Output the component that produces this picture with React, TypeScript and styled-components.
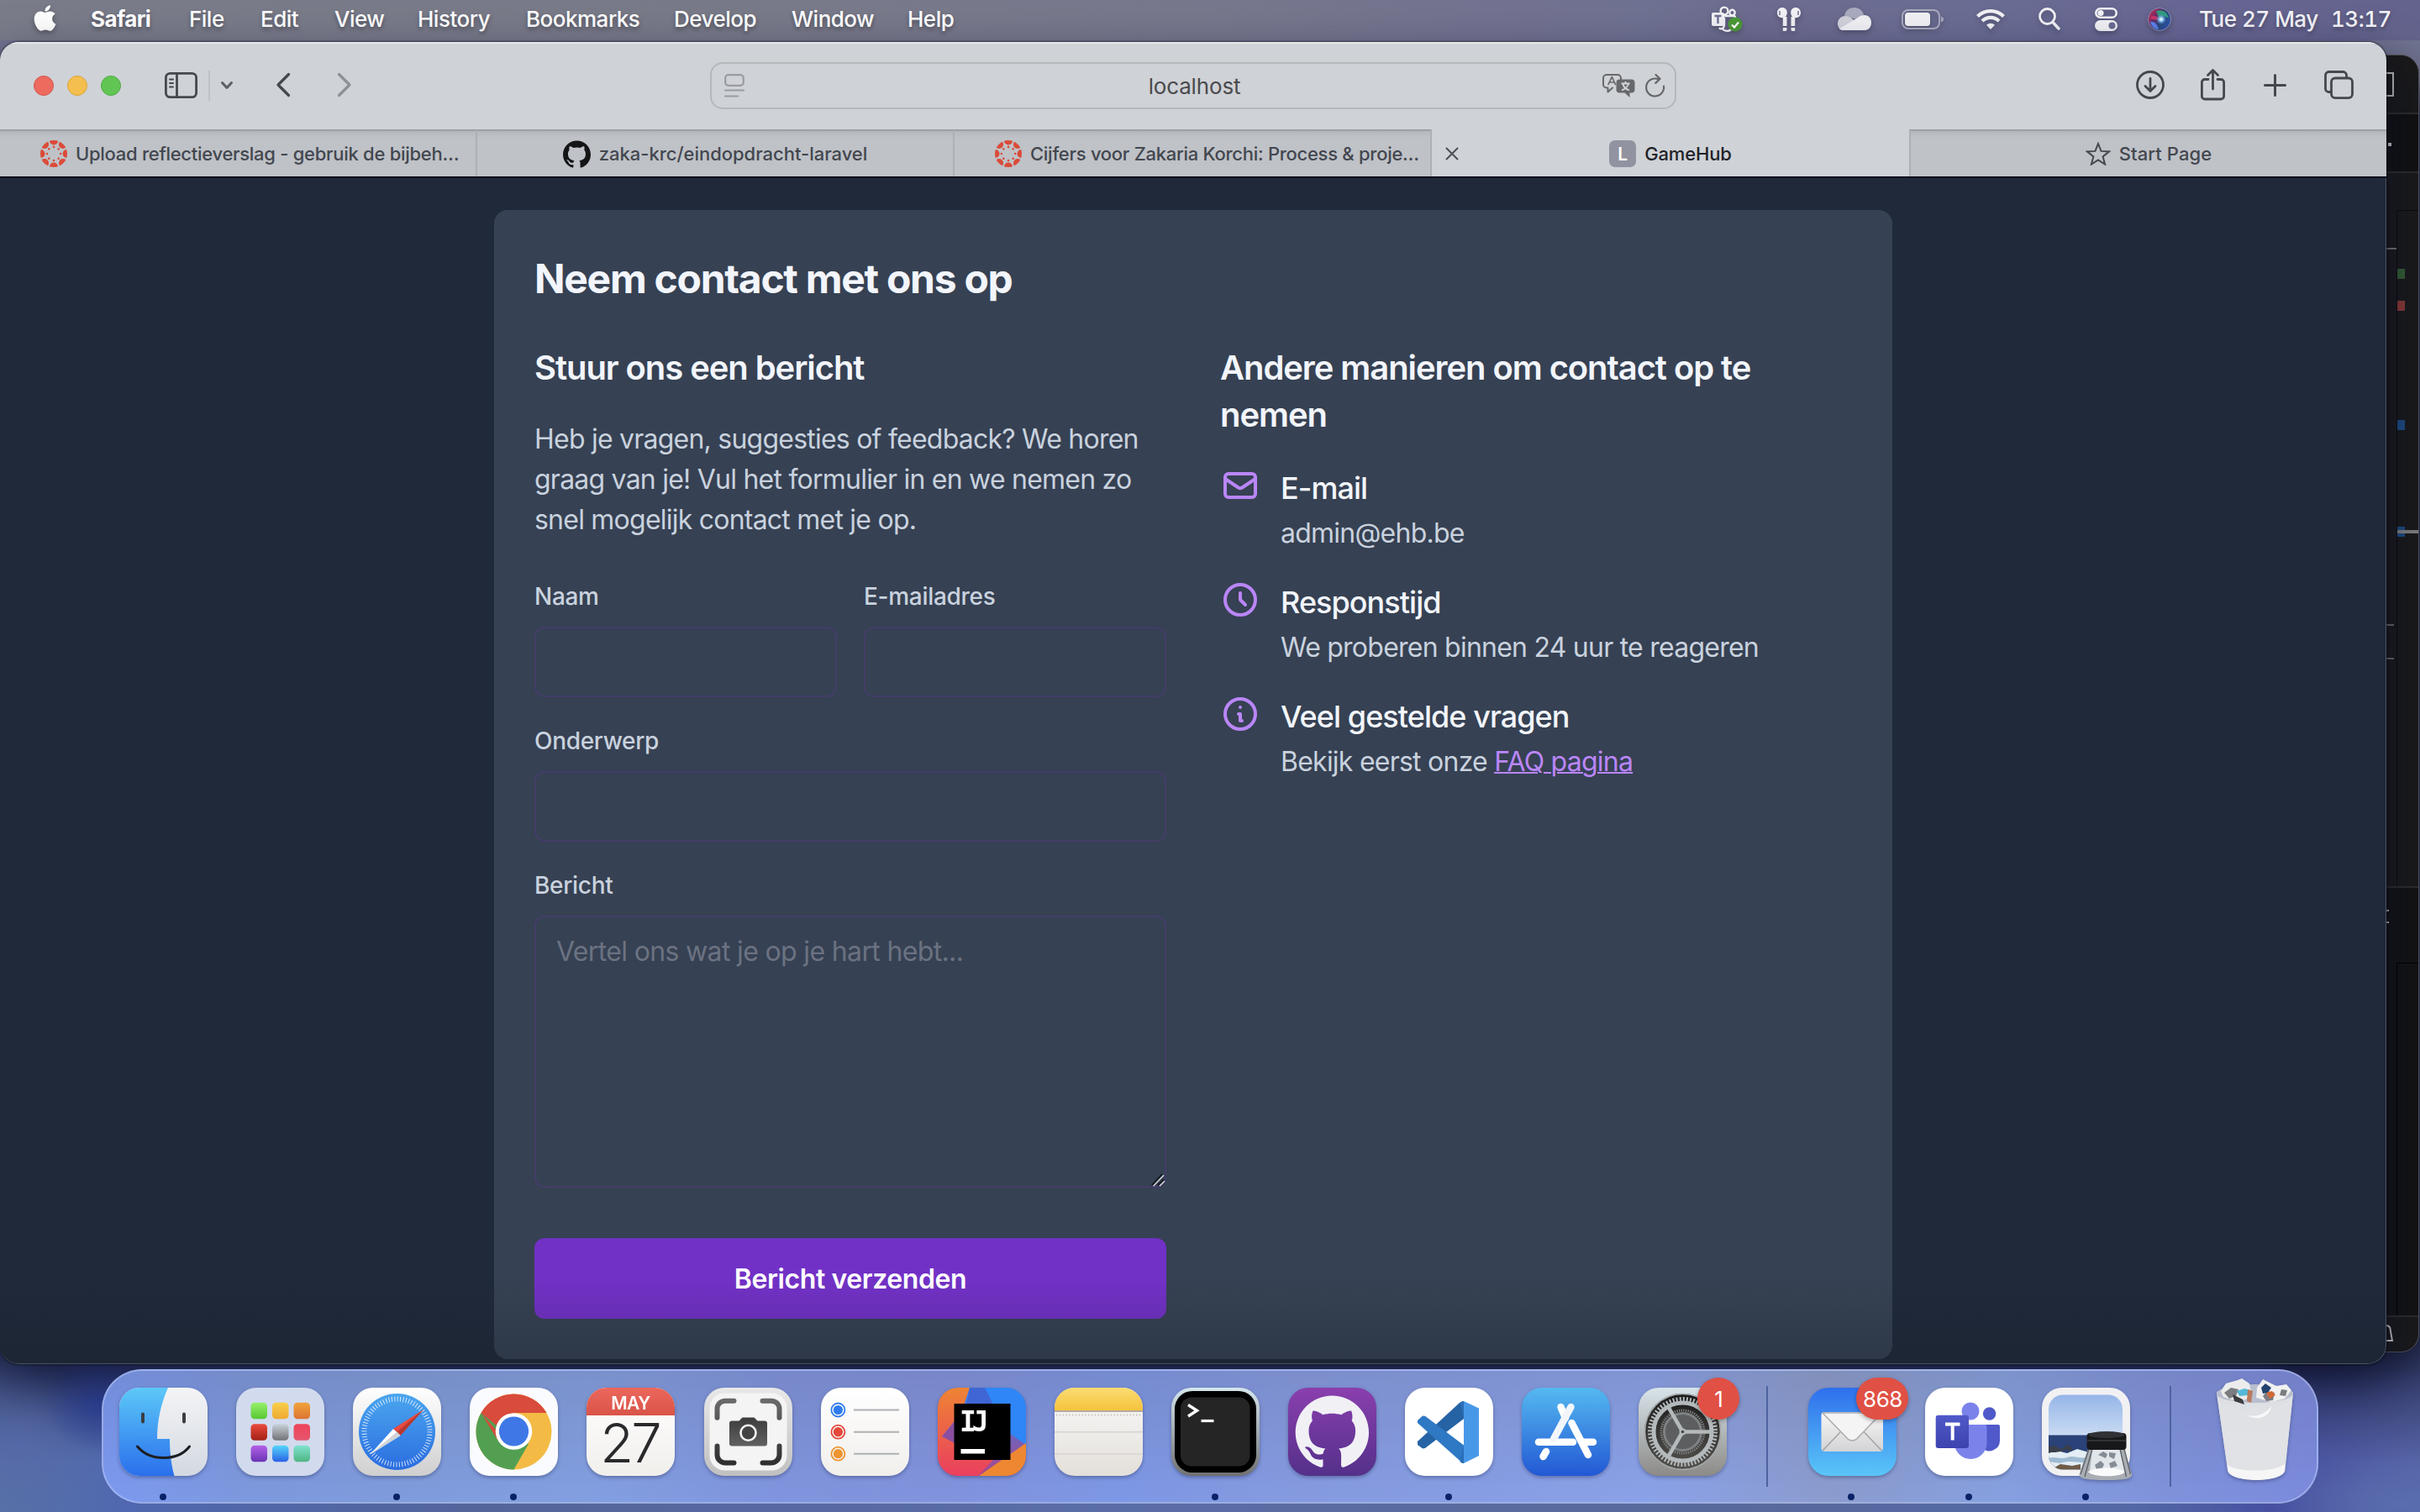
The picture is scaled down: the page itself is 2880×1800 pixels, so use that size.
import React from "react";
import styled, { createGlobalStyle, css } from "styled-components";
import { FaApple } from "react-icons/fa";

const sans = `Inter, Roboto, "Liberation Sans", sans-serif`;

const GlobalStyle = createGlobalStyle`
  *, *::before, *::after { box-sizing: border-box; }
  body { margin: 0; font-family: ${sans}; overflow: hidden; }
  h1, h2, h3, p { margin: 0; }
`;

/* ---------- desktop ---------- */

const Desktop = styled.div`
  position: relative;
  width: 2880px;
  height: 1800px;
  overflow: hidden;
  background:
    radial-gradient(ellipse 70px 60px at 120px 1670px, #2f4398 0%, transparent 100%),
    radial-gradient(ellipse 110px 100px at 20px 1720px, rgba(86, 104, 168, 0.9) 0%, transparent 100%),
    radial-gradient(ellipse 160px 60px at 2860px 1790px, rgba(90, 110, 175, 0.9) 0%, transparent 100%),
    linear-gradient(180deg, #70738f 0, #70738f 90px, #2a3158 140px, #2a3158 1600px, transparent 1740px),
    linear-gradient(90deg, #5773a6 0, #5068b0 5%, #53659b 20%, #5a6da6 45%, #586a9c 70%, #5468a6 88%, #4650a0 94%, #5664a6 100%);
`;

const MenuBar = styled.header`
  display: flex;
  align-items: center;
  height: 48px;
  padding: 0 38px 3px 35px;
  color: #fff;
  background: linear-gradient(90deg, #7a7c8a 0%, #797a89 30%, #77788d 50%, #737290 62%, #6f7292 68%, #6d6b90 73%, #6b6e93 80%, #686794 90%, #64638d 100%);
`;

const AppleMark = styled.div`
  display: flex;
  width: 73px;
  padding: 0 0 2px 1px;
  font-size: 35px;
  filter: drop-shadow(0 3px 3px rgba(0, 0, 0, 0.3));
`;

const MenuItem = styled.span<{ $w: number; $bold?: boolean }>`
  width: ${(p) => p.$w}px;
  margin-right: 43px;
  font-size: 26px;
  font-weight: ${(p) => (p.$bold ? 700 : 500)};
  letter-spacing: ${(p) => (p.$bold ? "-0.6px" : "-0.5px")};
  white-space: nowrap;
  text-shadow: 0 3px 5px rgba(0, 0, 0, 0.35);
`;

const StatusArea = styled.div`
  display: flex;
  align-items: center;
  margin-left: auto;
  svg { filter: drop-shadow(0 3px 3px rgba(0, 0, 0, 0.25)); overflow: visible; }
`;

const StatusSlot = styled.div<{ $w: number; $gap: number }>`
  display: flex;
  width: ${(p) => p.$w}px;
  margin-right: ${(p) => p.$gap}px;
`;

const Clock = styled.span<{ $w: number; $gap?: number }>`
  width: ${(p) => p.$w}px;
  margin-right: ${(p) => p.$gap || 0}px;
  font-size: 26px;
  font-weight: 500;
  letter-spacing: -0.5px;
  font-variant-numeric: tabular-nums;
  white-space: nowrap;
  color: #f3f3f8;
  text-shadow: 0 3px 5px rgba(0, 0, 0, 0.3);
`;

/* ---------- editor window peeking out on the right ---------- */

const EditorWindow = styled.section`
  position: absolute;
  left: 2700px;
  top: 65px;
  width: 179px;
  height: 1545px;
  padding-left: 139px;
  display: flex;
  flex-direction: column;
  overflow: hidden;
  border: 1px solid #55565a;
  border-radius: 22px;
  background: #1b1b1b;
  box-shadow: 0 20px 40px rgba(0, 0, 0, 0.4);
`;

const EditorBand = styled.div<{ $h: number; $bg: string }>`
  position: relative;
  flex: none;
  height: ${(p) => p.$h}px;
  background: ${(p) => p.$bg};
  border-bottom: 2px solid #2e2e2e;
`;

const EditorMap = styled.div<{ $top: number; $line: string }>`
  height: calc(100% - ${(p) => p.$top}px);
  margin: ${(p) => p.$top}px 0 0 12px;
  border-left: 1px solid ${(p) => p.$line};
  border-top: 1px solid ${(p) => p.$line};
`;

const EditorMark = styled.i<{ $x: number; $y: number; $w: number; $h: number; $c: string }>`
  position: absolute;
  left: ${(p) => p.$x}px;
  top: ${(p) => p.$y}px;
  width: ${(p) => p.$w}px;
  height: ${(p) => p.$h}px;
  background: ${(p) => p.$c};
`;

/* ---------- browser window ---------- */

const BrowserWindow = styled.section`
  position: absolute;
  left: 0;
  top: 50px;
  width: 2840px;
  height: 1574px;
  display: flex;
  flex-direction: column;
  overflow: hidden;
  border-radius: 22px;
  background: #20293a;
  box-shadow: 0 0 2px 1px rgba(0, 0, 0, 0.45), 0 24px 60px rgba(5, 8, 40, 0.6);
`;

const Toolbar = styled.div`
  flex: none;
  display: flex;
  align-items: center;
  height: 104px;
  padding: 0 38px 2px 40px;
  background: #cfd2d7;
  border-top: 2px solid #e6e8eb;
`;

const TrafficLights = styled.div`
  display: flex;
  gap: 16px;
  margin-right: 52px;
`;

const Light = styled.i<{ $c: string; $b: string }>`
  width: 24px;
  height: 24px;
  border-radius: 50%;
  background: ${(p) => p.$c};
  border: 1px solid ${(p) => p.$b};
`;

const ToolIcon = styled.div<{ $w: number; $gap: number }>`
  display: flex;
  width: ${(p) => p.$w}px;
  margin: 0 ${(p) => p.$gap}px 2px 0;
  svg { overflow: visible; }
`;

const ToolDivider = styled.i`
  width: 2px;
  height: 36px;
  margin-right: 13px;
  background: #bec1c6;
`;

const AddressBar = styled.div`
  display: flex;
  align-items: center;
  justify-content: space-between;
  width: 1150px;
  height: 56px;
  margin-left: 427px;
  padding: 0 11px 0 15px;
  border: 2px solid #b5b7bb;
  border-radius: 15px;
`;

const Address = styled.span`
  margin-left: 50px;
  font-size: 26px;
  letter-spacing: -0.15px;
  color: #4a4a4c;
`;

const AddressTools = styled.div`
  display: flex;
  align-items: center;
  gap: 12px;
  svg { overflow: visible; }
`;

const ToolbarEnd = styled.div`
  display: flex;
  align-items: center;
  margin-left: auto;
`;

const TabStrip = styled.nav`
  flex: none;
  display: grid;
  grid-template-columns: repeat(5, 568px);
  height: 56px;
`;

const Tab = styled.div<{ $active?: boolean; $long?: boolean; $edge?: "left" | "right" }>`
  position: relative;
  display: flex;
  align-items: center;
  justify-content: ${(p) => (p.$long ? "flex-start" : "center")};
  gap: 10px;
  padding: 0 0 0 ${(p) => (p.$long ? 48 : 0)}px;
  font-size: 22px;
  font-weight: 450;
  white-space: nowrap;
  color: #43474f;
  background: linear-gradient(180deg, #b4b7bc 0, #bfc2c7 8px);
  border-top: 2px solid #9c9fa4;
  ${(p) => p.$edge && css`border-${p.$edge}: 2px solid #adb0b5;`}
  ${(p) =>
    p.$active &&
    css`
      color: #1f2227;
      background: #cfd2d7;
      border-top-color: #cfd2d7;
    `}
`;

const TabTitle = styled.span<{ $ls: number }>`
  letter-spacing: ${(p) => p.$ls}px;
`;

const TabClose = styled.div`
  position: absolute;
  left: 16px;
  top: 19px;
  display: flex;
`;

const LetterIcon = styled.b`
  display: grid;
  place-items: center;
  width: 32px;
  height: 32px;
  border-radius: 7px;
  background: #9293a0;
  color: #fff;
  font-size: 21px;
  font-weight: 600;
`;

/* ---------- page ---------- */

const Page = styled.main`
  position: relative;
  flex: 1;
  display: flex;
  justify-content: center;
  align-items: flex-start;
  padding-top: 38px;
  border-top: 2px solid #04071a;
  &::after {
    content: "";
    position: absolute;
    inset: 0;
    border: solid #4b5462;
    border-width: 0 1px 1px 0;
    border-radius: 0 0 22px 22px;
    background: linear-gradient(180deg, transparent 1310px, rgba(20, 28, 36, 0.25) 1412px);
    pointer-events: none;
  }
`;

const Card = styled.article`
  width: 1664px;
  height: 1368px;
  padding: 48px;
  border-radius: 16px;
  background: #364153;
`;

const Title = styled.h1`
  margin-bottom: 46px;
  padding-top: 2px;
  font-size: 48px;
  line-height: 64px;
  font-weight: 700;
  letter-spacing: -1.28px;
  color: #f2f5fb;
`;

const Columns = styled.div`
  display: grid;
  grid-template-columns: 1fr 1fr;
  gap: 64px;
`;

const Subtitle = styled.h2`
  margin-bottom: 32px;
  font-size: 40px;
  line-height: 56px;
  font-weight: 600;
  letter-spacing: -1.08px;
  color: #f2f5fb;
`;

const Intro = styled.p`
  margin-bottom: 47px;
  padding-top: 1px;
  font-size: 32px;
  line-height: 48px;
  letter-spacing: -0.77px;
  white-space: nowrap;
  color: #c9d2de;
`;

const Form = styled.form`
  display: grid;
  grid-template-columns: 360px 360px;
  gap: 32px;
`;

const Field = styled.label<{ $wide?: boolean }>`
  display: flex;
  flex-direction: column;
  gap: 16px;
  grid-column: ${(p) => (p.$wide ? "1 / -1" : "auto")};
  font-size: 28px;
  line-height: 40px;
  font-weight: 500;
  letter-spacing: -0.3px;
  color: #c9d2de;
`;

const fieldBox = css`
  width: 100%;
  padding: 17px 24px 15px;
  border: 2px solid #433d68;
  border-radius: 12px;
  outline: none;
  background: transparent;
  color: #f2f5fb;
  font: 400 32px/48px ${sans};
`;

const Input = styled.input`
  ${fieldBox}
  height: 84px;
`;

const AreaWrap = styled.div`
  position: relative;
  display: flex;
`;

const Area = styled.textarea`
  ${fieldBox}
  height: 324px;
  resize: none;
  letter-spacing: -0.65px;
  &::placeholder { color: #6b7281; opacity: 1; }
`;

const Grip = styled.svg`
  position: absolute;
  right: 1px;
  bottom: 1px;
`;

const Submit = styled.button`
  grid-column: 1 / -1;
  height: 96px;
  margin-top: 28px;
  padding: 3px 0 1px;
  border: 0;
  border-radius: 12px;
  background: #7231c6;
  color: #fff;
  font: 600 32px/48px ${sans};
  letter-spacing: -0.4px;
`;

const ContactList = styled.div`
  display: flex;
  flex-direction: column;
  gap: 32px;
`;

const ContactItem = styled.div`
  display: flex;
  align-items: flex-start;
  gap: 24px;
`;

const ItemTitle = styled.h3`
  margin-bottom: 2px;
  font-size: 36px;
  line-height: 54px;
  font-weight: 500;
  letter-spacing: -0.95px;
  color: #f2f5fb;
`;

const ItemText = styled.p`
  margin-bottom: -1px;
  padding-top: 1px;
  font-size: 32px;
  line-height: 48px;
  letter-spacing: -0.76px;
  color: #c9d2de;
`;

const Link = styled.a`
  color: #ba86f8;
  text-decoration: underline;
  text-decoration-thickness: 2px;
`;

/* ---------- dock ---------- */

const Dock = styled.footer`
  position: absolute;
  left: 121px;
  top: 1630px;
  width: 2638px;
  height: 160px;
  padding: 20px 4px 0 2px;
  display: flex;
  align-items: flex-start;
  border: 2px solid rgba(190, 205, 245, 0.5);
  border-radius: 48px;
  background:
    linear-gradient(180deg, rgba(90, 100, 150, 0.22), rgba(130, 160, 255, 0.18)),
    linear-gradient(90deg, #7a98ee 0%, #7d97d8 6%, #7f9bd4 14%, #839fdb 22%, #7f93d8 30%, #8190d6 38%, #7d96e0 46%, #8699da 54%, #889ddf 62%, #8ca2e4 70%, #8d9bc4 78%, #87a0da 86%, #7f90d4 93%, #7a86d6 100%);
`;

const DockSlot = styled.div<{ $running?: boolean }>`
  position: relative;
  display: flex;
  justify-content: center;
  flex: none;
  width: 139.1px;
  height: 134px;
  svg { overflow: visible; filter: drop-shadow(0 2px 2px rgba(20, 30, 70, 0.35)); }
  ${(p) =>
    p.$running &&
    css`
      &::after {
        content: "";
        position: absolute;
        left: 65px;
        top: 126px;
        width: 8px;
        height: 8px;
        border-radius: 50%;
        background: #0a2266;
      }
    `}
`;

const DockDivider = styled.i`
  flex: 1;
  height: 120px;
  margin-top: -2px;
  background: linear-gradient(#4f63a0, #4f63a0) 50% 0 / 2px 100% no-repeat;
`;

const Badge = styled.span<{ $w: number; $x: number }>`
  position: absolute;
  left: ${(p) => p.$x}px;
  top: -12px;
  width: ${(p) => p.$w}px;
  height: 50px;
  border-radius: 25px;
  display: grid;
  place-items: center;
  background: #e05044;
  color: #fff;
  font-size: 26px;
  letter-spacing: -0.5px;
  box-shadow: 0 2px 5px rgba(0, 0, 0, 0.3);
`;

const GITHUB =
  "M12 .297c-6.63 0-12 5.373-12 12 0 5.303 3.438 9.8 8.205 11.385.6.113.82-.258.82-.577 0-.285-.01-1.04-.015-2.04-3.338.724-4.042-1.61-4.042-1.61C4.422 18.07 3.633 17.7 3.633 17.7c-1.087-.744.084-.729.084-.729 1.205.084 1.838 1.236 1.838 1.236 1.07 1.835 2.809 1.305 3.495.998.108-.776.417-1.305.76-1.605-2.665-.3-5.466-1.332-5.466-5.93 0-1.31.465-2.38 1.235-3.22-.135-.303-.54-1.523.105-3.176 0 0 1.005-.322 3.3 1.23.96-.267 1.98-.399 3-.405 1.02.006 2.04.138 3 .405 2.28-1.552 3.285-1.23 3.285-1.23.645 1.653.24 2.873.12 3.176.765.84 1.23 1.91 1.23 3.22 0 4.61-2.805 5.625-5.475 5.92.42.36.81 1.096.81 2.22 0 1.606-.015 2.896-.015 3.286 0 .315.21.69.825.57C20.565 22.092 24 17.592 24 12.297c0-6.627-5.373-12-12-12";

const spokes = [0, 45, 90, 135, 180, 225, 270, 315];

const CanvasIcon = () => (
  <svg width="32" height="32" viewBox="0 0 32 32">
    <clipPath id="canvasDisc"><circle cx="16" cy="16" r="16" /></clipPath>
    <g fill="#da4b39" clipPath="url(#canvasDisc)">
      {spokes.map((a) => (
        <g key={a} transform={`rotate(${a} 16 16)`}>
          <circle cx="16" cy="0.4" r="5.1" />
          <circle cx="16" cy="7.9" r="1.3" />
        </g>
      ))}
    </g>
  </svg>
);

const MenuStatus = () => (
  <StatusArea>
    <StatusSlot $w={37} $gap={41}>
      <svg width="37" height="32" viewBox="0 0 37 32">
        <g fill="none" stroke="#f1f1f5" strokeWidth="2.4">
          <circle cx="15" cy="6" r="4.4" />
          <circle cx="24.5" cy="8" r="3.2" />
          <path d="M13 12h13a2 2 0 0 1 2 2v6M15 14v8c0 6-5 6-6 4M12 26c3 5 9 5 12 1" />
        </g>
        <rect x="0" y="8" width="15" height="16" rx="2" fill="#f1f1f5" />
        <path d="M3.500 12h8M7.500 12v9" stroke="#6f7195" strokeWidth="2.400" />
        <circle cx="28" cy="22" r="8.500" fill="#4b9a35" />
        <path d="M24 22.500l3 3 5-6" fill="none" stroke="#fff" strokeWidth="2.200" />
      </svg>
    </StatusSlot>
    <StatusSlot $w={28} $gap={44}>
      <svg width="28" height="28" viewBox="0 0 28 28" fill="#f1f1f5">
        <path d="M0 6.500C0 2.500 2.500 0 6 0s5.800 2.500 5.800 6-2.300 6.200-5.800 6.200S0 10 0 6.500zM28 6.500C28 2.500 25.500 0 22 0s-5.800 2.500-5.800 6 2.300 6.200 5.800 6.200S28 10 28 6.500z" />
        <path d="M6.800 11h4.700v11H6.800zM6.800 24h4.700v2.600a1.500 1.500 0 0 1-1.500 1.400H6.800zM16.500 11h4.700v11h-4.700zM16.500 24h4.700v4h-3.200a1.500 1.500 0 0 1-1.500-1.400z" />
        <path d="M3 4v5M25 4v5" stroke="#6f7195" strokeWidth="1.500" />
      </svg>
    </StatusSlot>
    <StatusSlot $w={40} $gap={36}>
      <svg width="40" height="27" viewBox="0 0 40 27">
        <path d="M8 10C9 3 14 0 20 0c6 0 10 4 11 9l-9 5z" fill="#a9abbf" />
        <path d="M7 27c-5 0-7-4-7-8 0-5 4-9 9-9 5 0 8 3 13 7z" fill="#d0d1db" />
        <path d="M2 25l22-13c2-2 5-3 8-3 5 0 8 4 8 9s-3 9-8 9H7c-2 0-4-.5-5-2z" fill="#f1f1f5" />
      </svg>
    </StatusSlot>
    <StatusSlot $w={50} $gap={39}>
      <svg width="50" height="24" viewBox="0 0 50 24">
        <rect x="1" y="1" width="44" height="22" rx="7" fill="none" stroke="#a9aac0" strokeWidth="2" />
        <rect x="4" y="4" width="30" height="16" rx="4" fill="#f1f1f5" />
        <path d="M47 8.500c2.500.7 3 2 3 3.500s-.5 2.800-3 3.500z" fill="#a9aac0" />
      </svg>
    </StatusSlot>
    <StatusSlot $w={34} $gap={40}>
      <svg width="34" height="25" viewBox="0 0 34 25" fill="none" stroke="#f1f1f5" strokeWidth="4.200">
        <path d="M1.500 9.500a22 22 0 0 1 31 0M7 15a14 14 0 0 1 20 0" />
        <path d="M17 25l-5-5.300a7.200 7.200 0 0 1 10 0z" fill="#f1f1f5" stroke="none" />
      </svg>
    </StatusSlot>
    <StatusSlot $w={26} $gap={41}>
      <svg width="26" height="27" viewBox="0 0 26 27" fill="none" stroke="#f1f1f5" strokeWidth="2.800" strokeLinecap="round">
        <circle cx="10.500" cy="10.500" r="9" />
        <path d="M17.500 18l6.500 7" strokeWidth="3.400" />
      </svg>
    </StatusSlot>
    <StatusSlot $w={27} $gap={36}>
      <svg width="27" height="28" viewBox="0 0 27 28">
        <rect x="1.300" y="1.300" width="24.400" height="10.400" rx="5.200" fill="none" stroke="#f1f1f5" strokeWidth="2.600" />
        <circle cx="7" cy="6.500" r="3.600" fill="#f1f1f5" />
        <rect x="0" y="15" width="27" height="13" rx="6.500" fill="#f1f1f5" />
        <circle cx="20.500" cy="21.500" r="4" fill="#696b92" />
      </svg>
    </StatusSlot>
    <StatusSlot $w={28} $gap={33}>
      <svg width="28" height="28" viewBox="0 0 28 28">
        <defs>
          <radialGradient id="siriCore">
            <stop offset="0" stopColor="#fff" />
            <stop offset=".3" stopColor="#a9e4ff" />
            <stop offset="1" stopColor="#3f74d8" stopOpacity="0" />
          </radialGradient>
          <linearGradient id="siriBase" x1="0" y1=".2" x2="1" y2=".8">
            <stop offset="0" stopColor="#d22a55" />
            <stop offset=".35" stopColor="#5b2f6a" />
            <stop offset=".6" stopColor="#2a4a7a" />
            <stop offset="1" stopColor="#2b53b8" />
          </linearGradient>
        </defs>
        <circle cx="14" cy="14" r="13.500" fill="url(#siriBase)" stroke="#8d8fb0" strokeWidth="1" />
        <path d="M10 4c8-3 14 3 15 9-5-4-9-3-12-1z" fill="#2fae82" opacity=".85" />
        <path d="M3 17c4-1 8 2 10 9-5 0-9-4-10-9z" fill="#5a80ec" />
        <path d="M3 12c4-4 8-2 11 2-4 1-8 1-11-2z" fill="#e0356a" opacity=".8" />
        <circle cx="16" cy="14" r="6.500" fill="url(#siriCore)" />
      </svg>
    </StatusSlot>
    <Clock $w={140} $gap={17}>Tue 27 May</Clock>
    <Clock $w={68}>13:17</Clock>
  </StatusArea>
);

const ink = { fill: "none", stroke: "#44484f", strokeWidth: 2.8, strokeLinecap: "round", strokeLinejoin: "round" } as const;

const BrowserToolbar = () => (
  <Toolbar>
    <TrafficLights>
      <Light $c="#ec6a5e" $b="#d5554b" />
      <Light $c="#f4bf4f" $b="#dca43a" />
      <Light $c="#61c554" $b="#4eaa42" />
    </TrafficLights>
    <ToolIcon $w={39} $gap={13}>
      <svg width="39" height="31" viewBox="0 0 39 31" {...ink}>
        <rect x="1.400" y="1.400" width="36.200" height="28.200" rx="5" />
        <path d="M14.500 2v27" />
        <path d="M6 8.500h4M6 13h4M6 17.500h4" strokeWidth="2" />
      </svg>
    </ToolIcon>
    <ToolDivider />
    <ToolIcon $w={14} $gap={52}>
      <svg width="14" height="9" viewBox="0 0 14 9" {...ink} stroke="#5c6067" strokeWidth="3"><path d="M1.500 1.500L7 7.500l5.500-6" /></svg>
    </ToolIcon>
    <ToolIcon $w={16} $gap={57}>
      <svg width="16" height="28" viewBox="0 0 16 28" {...ink} strokeWidth="3.200"><path d="M14.500 1.500L2 14l12.500 12.500" /></svg>
    </ToolIcon>
    <ToolIcon $w={16} $gap={0}>
      <svg width="16" height="28" viewBox="0 0 16 28" {...ink} stroke="#8d9095" strokeWidth="3.200"><path d="M1.500 1.500L14 14 1.500 26.500" /></svg>
    </ToolIcon>
    <AddressBar>
      <svg width="24" height="28" viewBox="0 0 24 28" {...ink} stroke="#9a9ca1" strokeWidth="2.200">
        <rect x="1.200" y="1.200" width="21.600" height="12.600" rx="3.500" />
        <path d="M1 19.500h22M1 26.500h15" />
      </svg>
      <Address>localhost</Address>
      <AddressTools>
        <svg width="39" height="28" viewBox="0 0 39 28">
          <path d="M12 16.500l-5.500 5v-5H5a4 4 0 0 1-4-4V5a4 4 0 0 1 4-4h13a4 4 0 0 1 4 4v1.500" {...ink} stroke="#67686b" strokeWidth="2" />
          <path d="M7 12.500l4.300-9 4.200 9M8.500 10h5.500" {...ink} stroke="#67686b" strokeWidth="1.700" />
          <path d="M20.500 6.500h14a4 4 0 0 1 4 4v8a4 4 0 0 1-4 4h-2v5.500l-6-5.500h-6a4 4 0 0 1-4-4v-8a4 4 0 0 1 4-4z" fill="#67686b" />
          <path d="M22.500 11.500h10M27.500 9v2.500M31 11.500c-.5 3-4 6.500-8 8M24.500 12c.5 3 3.500 6 7.500 7.500" fill="none" stroke="#d4d6da" strokeWidth="1.800" />
        </svg>
        <svg width="24" height="28" viewBox="0 0 24 28" {...ink} stroke="#67686b" strokeWidth="2.200">
          <path d="M22 14.500a10.500 10.500 0 1 1-8-8.700h3.500M12.500 1l5 4.900-5.200 5" />
        </svg>
      </AddressTools>
    </AddressBar>
    <ToolbarEnd>
      <ToolIcon $w={34} $gap={43}>
        <svg width="34" height="34" viewBox="0 0 34 34" {...ink}><circle cx="17" cy="17" r="15.500" /><path d="M17 9.500v15M11 18.500l6 6 6-6" /></svg>
      </ToolIcon>
      <ToolIcon $w={29} $gap={46}>
        <svg width="29" height="38" viewBox="0 0 29 38" {...ink}><path d="M9 12.500H5a3.600 3.600 0 0 0-3.600 3.600v16.300A3.600 3.600 0 0 0 5 36h19a3.600 3.600 0 0 0 3.600-3.600V16.100a3.600 3.600 0 0 0-3.600-3.600h-4M14.500 24V2M8.500 7.500l6-6 6 6" /></svg>
      </ToolIcon>
      <ToolIcon $w={27} $gap={45}>
        <svg width="27" height="27" viewBox="0 0 27 27" {...ink} strokeWidth="3"><path d="M13.500 1.500v24M1.500 13.500h24" /></svg>
      </ToolIcon>
      <ToolIcon $w={36} $gap={0}>
        <svg width="35" height="34" viewBox="0 0 35 34" {...ink}><rect x="8.500" y="9" width="25" height="23.600" rx="4.500" /><path d="M8 25.500H5.500a4 4 0 0 1-4-4v-16a4 4 0 0 1 4-4h17a4 4 0 0 1 4 4V8" /></svg>
      </ToolIcon>
    </ToolbarEnd>
  </Toolbar>
);

const Tabs = () => (
  <TabStrip>
    <Tab $long $edge="right"><CanvasIcon /><TabTitle $ls={-0.28}>Upload reflectieverslag - gebruik de bijbeh…</TabTitle></Tab>
    <Tab $edge="right">
      <svg width="33" height="33" viewBox="0 0 24 24"><path d={GITHUB} fill="#141516" /></svg>
      <TabTitle $ls={-0.02}>zaka-krc/eindopdracht-laravel</TabTitle>
    </Tab>
    <Tab $long $edge="right"><CanvasIcon /><TabTitle $ls={-0.28}>Cijfers voor Zakaria Korchi: Process &amp; proje…</TabTitle></Tab>
    <Tab $active>
      <TabClose><svg width="16" height="16" viewBox="0 0 16 16"><path d="M1 1l14 14M15 1L1 15" stroke="#4c5057" strokeWidth="2" /></svg></TabClose>
      <LetterIcon>L</LetterIcon>
      <TabTitle $ls={-0.15}>GameHub</TabTitle>
    </Tab>
    <Tab $edge="left">
      <svg width="30" height="28" viewBox="0 0 30 28"><path d="M15 2l3.500 8.900 9.600.5-7.500 6 2.500 9.200L15 21.400l-8.100 5.200 2.500-9.200-7.500-6 9.600-.5z" {...ink} strokeWidth="2" strokeLinejoin="miter" /></svg>
      <TabTitle $ls={0.1}>Start Page</TabTitle>
    </Tab>
  </TabStrip>
);

const PurpleIcon = ({ d }: { d: string }) => (
  <svg width="48" height="48" viewBox="0 0 24 24" fill="none" stroke="#ba86f8" strokeWidth="2" strokeLinecap="round" strokeLinejoin="round">
    <path d={d} />
  </svg>
);

const ContactPage = () => (
  <Page>
    <Card>
      <Title>Neem contact met ons op</Title>
      <Columns>
        <div>
          <Subtitle>Stuur ons een bericht</Subtitle>
          <Intro>
            Heb je vragen, suggesties of feedback? We horen<br />
            graag van je! Vul het formulier in en we nemen zo<br />
            snel mogelijk contact met je op.
          </Intro>
          <Form>
            <Field>Naam<Input /></Field>
            <Field>E-mailadres<Input /></Field>
            <Field $wide>Onderwerp<Input /></Field>
            <Field $wide>
              Bericht
              <AreaWrap>
                <Area placeholder="Vertel ons wat je op je hart hebt..." />
                <Grip width="17" height="17" viewBox="0 0 17 17">
                  <path d="M1 15L13 2M8 15l7-7" stroke="#151a22" strokeWidth="2" />
                  <path d="M2.500 16L15 3M10 16l6-6" stroke="#d5d8dc" strokeWidth="1.500" />
                </Grip>
              </AreaWrap>
            </Field>
            <Submit type="button">Bericht verzenden</Submit>
          </Form>
        </div>
        <div>
          <Subtitle>Andere manieren om contact op te<br />nemen</Subtitle>
          <ContactList>
            <ContactItem>
              <PurpleIcon d="M3 8l7.890 5.260a2 2 0 0 0 2.220 0L21 8M5 19h14a2 2 0 0 0 2-2V7a2 2 0 0 0-2-2H5a2 2 0 0 0-2 2v10a2 2 0 0 0 2 2z" />
              <div><ItemTitle>E-mail</ItemTitle><ItemText>admin@ehb.be</ItemText></div>
            </ContactItem>
            <ContactItem>
              <PurpleIcon d="M12 8v4l3 3m6-3a9 9 0 1 1-18 0 9 9 0 0 1 18 0z" />
              <div><ItemTitle>Responstijd</ItemTitle><ItemText>We proberen binnen 24 uur te reageren</ItemText></div>
            </ContactItem>
            <ContactItem>
              <PurpleIcon d="M13 16h-1v-4h-1m1-4h.01M21 12a9 9 0 1 1-18 0 9 9 0 0 1 18 0z" />
              <div><ItemTitle>Veel gestelde vragen</ItemTitle><ItemText>Bekijk eerst onze <Link>FAQ pagina</Link></ItemText></div>
            </ContactItem>
          </ContactList>
        </div>
      </Columns>
    </Card>
  </Page>
);

const Editor = () => (
  <EditorWindow>
    <EditorBand $h={70} $bg="#1a1a1a">
      <EditorMark $x={-8} $y={20} $w={17} $h={29} $c="linear-gradient(#1a1a1a, #1a1a1a) 2px 2px / 13px 25px no-repeat #b9b9b9" />
    </EditorBand>
    <EditorBand $h={70} $bg="#121212">
      <EditorMark $x={2} $y={34} $w={4} $h={4} $c="#c8c8c8" />
    </EditorBand>
    <EditorBand $h={851} $bg="#1b1b1b">
      <EditorMap $top={44} $line="#0c0c0c" />
      <EditorMark $x={0} $y={89} $w={12} $h={2} $c="#777" />
      <EditorMark $x={13} $y={114} $w={9} $h={12} $c="#365f34" />
      <EditorMark $x={13} $y={152} $w={9} $h={12} $c="#8b3b35" />
      <EditorMark $x={13} $y={294} $w={9} $h={12} $c="#1f4c80" />
      <EditorMark $x={13} $y={421} $w={9} $h={12} $c="#1f4c80" />
      <EditorMark $x={13} $y={425} $w={27} $h={4} $c="#80817f" />
      <EditorMark $x={0} $y={537} $w={9} $h={2} $c="#6a6a6a" />
      <EditorMark $x={0} $y={577} $w={9} $h={2} $c="#6a6a6a" />
    </EditorBand>
    <EditorBand $h={511} $bg="#141414">
      <EditorMap $top={89} $line="#000" />
      <EditorMark $x={0} $y={26} $w={3} $h={2} $c="#bbb" />
      <EditorMark $x={0} $y={40} $w={3} $h={2} $c="#bbb" />
    </EditorBand>
    <svg width="8" height="32" viewBox="0 0 8 32"><path d="M0 10c4 0 5 3 5 7l2 11H0" fill="none" stroke="#d0d0d0" strokeWidth="1.800" /></svg>
  </EditorWindow>
);

/* ---------- dock icons ---------- */

const Icon = ({ children }: { children: React.ReactNode }) => (
  <svg width="105" height="105" viewBox="0 0 105 105">{children}</svg>
);

const Grad = ({ id, a, b, h }: { id: string; a: string; b: string; h?: boolean }) => (
  <linearGradient id={id} x1="0" y1="0" x2={h ? 1 : 0} y2={h ? 0 : 1}>
    <stop offset="0" stopColor={a} />
    <stop offset="1" stopColor={b} />
  </linearGradient>
);

const Tile = ({ fill }: { fill: string }) => <rect width="105" height="105" rx="24" fill={fill} />;

const HiddenSvg = styled.svg`
  position: absolute;
`;

const Defs = () => (
  <HiddenSvg width="0" height="0">
    <defs>
      <clipPath id="tileClip"><rect width="105" height="105" rx="24" /></clipPath>
      <Grad id="finderBlue" a="#5cc8f8" b="#2a6fec" />
      <Grad id="finderGray" a="#f4f4f6" b="#d3d9e1" />
      <Grad id="whiteGray" a="#ffffff" b="#cfcfcf" />
      <Grad id="paper" a="#ffffff" b="#f1efec" />
      <Grad id="notePaper" a="#fafafa" b="#e3dfd9" />
      <Grad id="noteTop" a="#fbdc72" b="#f5c33d" />
      <Grad id="compass" a="#4aa6ee" b="#2b6de0" />
      <Grad id="calRed" a="#ec665c" b="#d95548" />
      <Grad id="shotOuter" a="#e8e8e8" b="#c0c0c0" />
      <Grad id="bracket" a="#6a6a6a" b="#2f2f2f" />
      <Grad id="camera" a="#3c3c3c" b="#616161" />
      <Grad id="termEdge" a="#d5e6ec" b="#707070" />
      <Grad id="ghPurple" a="#8a3fae" b="#54308a" />
      <Grad id="storeBlue" a="#55b9f0" b="#2258d4" />
      <Grad id="gearTile" a="#d8e4ea" b="#8c8a87" />
      <Grad id="gearDark" a="#1a1a1a" b="#55534f" />
      <Grad id="mailBlue" a="#2f6fec" b="#5ac6f8" />
      <Grad id="envelope" a="#f7f7f7" b="#d3d3d5" />
      <Grad id="teamsBox" a="#5059c9" b="#3c43ae" />
      <Grad id="sky" a="#94b5e8" b="#cbdcf3" />
      <Grad id="can" a="#d9dbe0" b="#f4f4f5" />
      <Grad id="ijOrange" a="#ee8434" b="#ea3f5f" />
      <Grad id="ijBlue" a="#2f86f6" b="#a8468c" />
    </defs>
  </HiddenSvg>
);

const FinderIcon = () => (
  <Icon>
    <Tile fill="url(#finderGray)" />
    <path d="M58 0C50 18 45 38 45 61h15c0 16 2 32 5.500 44H0V0z" fill="url(#finderBlue)" clipPath="url(#tileClip)" />
    <path d="M28 31.500v9M77 31.500v9" stroke="#3a3d42" strokeWidth="4" strokeLinecap="round" />
    <path d="M21.500 70c15 18 48 18 62 0" fill="none" stroke="#1d1e21" strokeWidth="3" strokeLinecap="round" />
  </Icon>
);

const launchColors = [
  ["#97f06c", "#58c832"], ["#f8cf4a", "#eea933"], ["#f0a43b", "#dd7433"],
  ["#ea4b3c", "#a32117"], ["#c8d3da", "#727477"], ["#ee4459", "#e5566e"],
  ["#b462e8", "#6b33b4"], ["#56d6fb", "#2a62e4"], ["#7fe3cf", "#4fb583"],
];

const LaunchpadIcon = () => (
  <Icon>
    <Tile fill="#d2dbee" />
    {launchColors.map(([a, b], i) => (
      <React.Fragment key={i}>
        <Grad id={`launch${i}`} a={a} b={b} />
        <rect x={17.5 + (i % 3) * 25.5} y={17.7 + Math.floor(i / 3) * 25.5} width="19.500" height="19.500" rx="4.500" fill={`url(#launch${i})`} />
      </React.Fragment>
    ))}
  </Icon>
);

const SafariIcon = () => (
  <Icon>
    <Tile fill="url(#whiteGray)" />
    <circle cx="52.500" cy="52.500" r="45.500" fill="url(#compass)" />
    <circle cx="52.500" cy="52.500" r="39" fill="none" stroke="#fff" strokeOpacity=".85" strokeWidth="6" strokeDasharray="0.900 2.503" />
    <path d="M84 26L56.500 57 48 49z" fill="#ea4a3f" />
    <path d="M84 26L56.500 57l-4-4.500z" fill="#b8382f" />
    <path d="M20.500 79.500L48 49l8.500 8z" fill="#fff" />
    <path d="M20.500 79.500l36-22.500-4-4.500z" fill="#cfd3d8" />
  </Icon>
);

const ChromeIcon = () => (
  <Icon>
    <Tile fill="#fafbff" />
    <circle cx="52.500" cy="52.500" r="45" fill="#f3bb45" />
    <path d="M52.500 52.500L70 67 52.500 97.500A45 45 0 0 1 13.500 30z" fill="#529f52" />
    <path d="M13.500 30a45 45 0 0 1 78 0h-39L33.500 63z" fill="#d94b3b" />
    <path d="M13.500 30l20.500 33 10-8z" fill="#529f52" />
    <path d="M13.500 30L34 63 31 50z" fill="#d94b3b" />
    <circle cx="52.500" cy="52" r="21.800" fill="#fff" />
    <circle cx="52.500" cy="52" r="17.600" fill="#3f78e6" />
  </Icon>
);

const CalendarIcon = () => (
  <Icon>
    <Tile fill="url(#paper)" />
    <path d="M0 0h105v33H0z" fill="url(#calRed)" clipPath="url(#tileClip)" />
    <text x="52.500" y="26" textAnchor="middle" fontFamily={sans} fontWeight="600" fontSize="21" letterSpacing="-0.5" fill="#fff">MAY</text>
    <text x="51.500" y="89" textAnchor="middle" fontFamily={sans} fontWeight="300" fontSize="65" letterSpacing="-3" fill="#2a2a2c">27</text>
  </Icon>
);

const ScreenshotIcon = () => (
  <Icon>
    <Tile fill="url(#shotOuter)" />
    <rect x="6.500" y="6.500" width="92" height="92" rx="18" fill="#f4f4f4" />
    <path d="M35.500 15.700H25a9.500 9.500 0 0 0-9.500 9.500v10.500M69.500 15.700H80a9.500 9.500 0 0 1 9.500 9.500v10.500M35.500 89.500H25a9.500 9.500 0 0 1-9.500-9.500V69.500M69.500 89.500H80a9.500 9.500 0 0 0 9.500-9.500V69.500" fill="none" stroke="url(#bracket)" strokeWidth="6" strokeLinecap="round" />
    <path d="M33 39.500h8.500l4-4h14l4 4H72a3 3 0 0 1 3 3v24a3 3 0 0 1-3 3H33a3 3 0 0 1-3-3v-24a3 3 0 0 1 3-3z" fill="url(#camera)" />
    <circle cx="52.500" cy="53.700" r="9" fill="#444" stroke="#f4f4f4" strokeWidth="2.600" />
  </Icon>
);

const RemindersIcon = () => (
  <Icon>
    <Tile fill="url(#paper)" />
    {[["#2f7cf0", 26.5], ["#e5473b", 52.7], ["#ee9430", 78.7]].map(([c, y]) => (
      <g key={c}>
        <circle cx="20.400" cy={y} r="8" fill="none" stroke={c as string} strokeWidth="1.800" />
        <circle cx="20.400" cy={y} r="5.600" fill={c as string} />
        <path d={`M39 ${y}h54`} stroke="#adb0b3" strokeWidth="2" />
      </g>
    ))}
  </Icon>
);

const IntelliJIcon = () => (
  <Icon>
    <Tile fill="url(#ijBlue)" />
    <g clipPath="url(#tileClip)">
      <path d="M0 0h38L28 30 5 58l61 28-18 19H0z" fill="url(#ijOrange)" />
      <path d="M38 0l-9 30L5 58l15 8V20h12z" fill="#8a4fa0" />
      <path d="M38 0h30l24 42-10 20L34 20z" fill="#3f66d4" />
      <path d="M56 0h49v68L82 52z" fill="#2f86f6" />
      <path d="M105 66v39H49z" fill="#ee8731" />
    </g>
    <rect x="19.500" y="19" width="67" height="67" fill="#000" />
    <text x="26" y="52" fontFamily={`"DejaVu Sans Mono", "Liberation Mono", monospace`} fontWeight="700" fontSize="33" letterSpacing="-5" fill="#fff">IJ</text>
    <rect x="27.500" y="73" width="28.500" height="5.500" fill="#fff" />
  </Icon>
);

const NotesIcon = () => (
  <Icon>
    <Tile fill="url(#notePaper)" />
    <path d="M0 0h105v27H0z" fill="url(#noteTop)" clipPath="url(#tileClip)" />
    <path d="M0 28h105" stroke="#b5ada0" strokeWidth="2" />
    <path d="M2 32.500h102" stroke="#c4c0b9" strokeWidth="1.600" strokeDasharray="1.600 2.200" />
    <path d="M0 52.700h105M0 79h105" stroke="#d6d4d1" strokeWidth="1.600" />
  </Icon>
);

const TerminalIcon = () => (
  <Icon>
    <Tile fill="url(#termEdge)" />
    <rect x="4" y="4" width="97" height="97" rx="21" fill="#000" />
    <rect x="11" y="11.500" width="82.500" height="82" rx="13" fill="#252525" />
    <path d="M20 20.500l10.500 6.700L20 34" fill="none" stroke="#fff" strokeWidth="3.400" />
    <path d="M35.500 39.500h15" stroke="#fff" strokeWidth="3.200" />
  </Icon>
);

const GithubIcon = () => (
  <Icon>
    <Tile fill="url(#ghPurple)" />
    <path d={GITHUB} transform="translate(8.700 8.500) scale(3.640)" fill="#f0f0f5" />
  </Icon>
);

const CodeIcon = () => (
  <Icon>
    <Tile fill="#fff" />
    <path d="M15 64v4l6 4.500 3-.5L70 37V16l-5 2z" fill="#2663a4" />
    <path d="M15 42v-3l6-5.500 3 .3L70 68.500 71 88l-5-.5z" fill="#2f78c4" />
    <path d="M70 16l18 8.500v56.500L70 90z" fill="#4799e8" />
    <path d="M70 90c-1.800 0-3.200-.6-4.500-2L70 70zM70 16c-1.800 0-3.200.6-4.500 2L70 36z" fill="#2b6eb6" />
  </Icon>
);

const StoreIcon = () => (
  <Icon>
    <Tile fill="url(#storeBlue)" />
    <g stroke="#fff" strokeWidth="8.500" strokeLinecap="round">
      <path d="M46.500 23L52 36M59.500 42L79 80M20 64.700h41M74 64.700h11M29 76l-3.500 6" />
      <path d="M58.500 23L38 61" stroke="#f2f6fb" />
    </g>
  </Icon>
);

const SettingsIcon = () => (
  <Icon>
    <Tile fill="url(#gearTile)" />
    <g fill="none">
      <circle cx="52.500" cy="52.500" r="45.500" fill="url(#gearDark)" />
      <circle cx="52.500" cy="52.500" r="45" stroke="#a9aeb0" strokeWidth="1.500" />
      <circle cx="52.500" cy="52.500" r="39" stroke="#b4b9bb" strokeWidth="5" strokeDasharray="2 2.084" />
      <circle cx="52.500" cy="52.500" r="34.500" stroke="#b4b9bb" strokeWidth="5" />
      <circle cx="52.500" cy="52.500" r="25.500" stroke="#7d8081" strokeWidth="3" strokeDasharray="1.400 1.270" />
      <circle cx="52.500" cy="52.500" r="22" fill="#5c5e60" stroke="#7f8283" strokeWidth="3" />
      <path d="M52.500 52.500h33M52.500 52.500L36 24M52.500 52.500L36 81" stroke="#b4b9bb" strokeWidth="4.500" />
      <circle cx="52.500" cy="52.500" r="4" fill="#b4b9bb" />
      <circle cx="52.500" cy="52.500" r="1.800" fill="#444" />
    </g>
  </Icon>
);

const MailIcon = () => (
  <Icon>
    <Tile fill="url(#mailBlue)" />
    <rect x="15.500" y="29" width="73.500" height="47" rx="4" fill="url(#envelope)" />
    <path d="M17 75l21-22M87.500 75l-21-22" stroke="#a3a4a6" strokeWidth="1.500" />
    <path d="M17 30l30 31q5.300 4 10.600 0L87.500 30z" fill="#f4f4f4" stroke="#aaabad" strokeWidth="1.500" strokeLinejoin="round" />
  </Icon>
);

const TeamsIcon = () => (
  <Icon>
    <Tile fill="#fff" />
    <circle cx="54" cy="28" r="10.500" fill="#7b83eb" />
    <circle cx="76.600" cy="31" r="7.700" fill="#5059c9" />
    <path d="M68 44h19a2 2 0 0 1 2 2v17a12.500 12.500 0 0 1-21 9z" fill="#5059c9" />
    <path d="M35 44h36a2.500 2.500 0 0 1 2.500 2.500V67A19.300 19.300 0 0 1 35 67z" fill="#7b83eb" />
    <rect x="12.700" y="32.700" width="39.300" height="39.300" rx="3" fill="url(#teamsBox)" />
    <path d="M24 43.500h17.500M32.700 43.500v19" stroke="#fff" strokeWidth="4" />
  </Icon>
);

const PreviewIcon = () => (
  <Icon>
    <Tile fill="#f1f1f3" />
    <clipPath id="photoClip"><rect x="8" y="8.500" width="88" height="89" rx="17" /></clipPath>
    <g clipPath="url(#photoClip)">
      <path d="M8 8h88v50H8z" fill="url(#sky)" />
      <path d="M8 56.500h88v41H8z" fill="#2a4278" />
      <path d="M8 78l10-3 12 3 12-5 14 4v25H8z" fill="#e3edf4" />
      <path d="M8 84c8-3 14 2 22-1s14 2 22 0v6c-12 0-20-3-30 1l-14-2z" fill="#9fbbd2" />
      <path d="M8 70l8-1 6 4 7-2-1 4-12 2H8zM26 70l6-2 5 5-5 3z" fill="#3b3f4b" />
      <path d="M10 98l12-7 14 2 10-2v7z" fill="#6f5c4a" />
    </g>
    <path d="M55 73h43l9 30c0 5-6 7-30.500 7S44.500 108 44.500 103z" fill="#a9aeb4" />
    <path d="M60 74h33l6 25c-8 5-32 5-42 0z" fill="#e1e6eb" />
    <path d="M67 80l6-4 5 3-2 5zM80 77l8 1-2 7-6-3zM63 92l7-5 4 4-2 5-7 1zM80 90l7-3 3 6-8 3z" fill="#858c96" />
    <path d="M55 100c10-6 34-6 44 0-3 7-40 7-44 0z" fill="#fafafa" />
    <path d="M46 103l10-30M105.500 103L98 73M51 106l9-33M100.500 106L93 73" stroke="#5f646a" strokeWidth="1.400" />
    <rect x="53.500" y="54" width="47" height="20" rx="4" fill="#17181a" />
    <ellipse cx="77" cy="56" rx="21.500" ry="4" fill="#303235" />
    <path d="M54 63h46" stroke="#3b3d40" strokeWidth="1.500" />
  </Icon>
);

const TrashIcon = () => (
  <Icon>
    <path d="M7 6c0-8 91-8 91 0l-10 92c-1 16-66 16-68 0z" fill="url(#can)" />
    <ellipse cx="52.500" cy="7" rx="45.500" ry="11" fill="#b9bfcf" />
    <path d="M12 4l6-9 14-4 5-2 9 6 3 16-16 6-18-6z" fill="#ececec" />
    <path d="M54 12l1-12 7-10 16 8 12-2 6 7-8 10-16 4z" fill="#f1f1f1" />
    <path d="M16 6l8-6 9 2-3 8-8 3zM84 2l7 1-2 7-7-1zM62 10l5-6 9 2-2 9-8 1z" fill="#7b7d80" />
    <path d="M31 4l9-3 7 2-3 6-10 1z" fill="#54b8d6" />
    <path d="M60 0l5-5 7 5-4 6-6 1z" fill="#23436f" />
    <path d="M66 6l7-2 4 5-7 4z" fill="#d26a36" />
    <path d="M26 8l12 6 2 6-12-4z" fill="#3c3c40" />
    <path d="M44 2l6 2-2 14-5-2z" fill="#b97c5f" />
    <path d="M7 7c1 12 16 17 28 18 8 .6 28 .6 36-.5C86 22 97 16 98 7l-9.500 91c-1 15-66 15-68 0z" fill="#dfe1e4" fillOpacity=".93" />
    <path d="M40 31c10 6 24 2 32-9-1 12-16 20-32 9z" fill="#f8f8f8" />
    <path d="M20 92c12 9 54 9 68-1l-.5 8c-2 14-65 14-67 0z" fill="#f6f6f7" />
  </Icon>
);

const leftApps: { el: React.ReactNode; running?: boolean; badge?: string }[] = [
  { el: <FinderIcon />, running: true },
  { el: <LaunchpadIcon /> },
  { el: <SafariIcon />, running: true },
  { el: <ChromeIcon />, running: true },
  { el: <CalendarIcon /> },
  { el: <ScreenshotIcon /> },
  { el: <RemindersIcon /> },
  { el: <IntelliJIcon /> },
  { el: <NotesIcon /> },
  { el: <TerminalIcon />, running: true },
  { el: <GithubIcon /> },
  { el: <CodeIcon />, running: true },
  { el: <StoreIcon /> },
  { el: <SettingsIcon />, badge: "1" },
];

const DockBar = () => (
  <Dock>
    {leftApps.map((app, i) => (
      <DockSlot key={i} $running={app.running}>
        {app.el}
        {app.badge && <Badge $w={50} $x={87}>{app.badge}</Badge>}
      </DockSlot>
    ))}
    <DockDivider />
    <DockSlot $running><MailIcon /><Badge $w={62} $x={75}>868</Badge></DockSlot>
    <DockSlot $running><TeamsIcon /></DockSlot>
    <DockSlot $running><PreviewIcon /></DockSlot>
    <DockDivider />
    <DockSlot><TrashIcon /></DockSlot>
  </Dock>
);

const menus: [string, number][] = [
  ["File", 42], ["Edit", 45], ["View", 56], ["History", 86], ["Bookmarks", 133], ["Develop", 97], ["Window", 95], ["Help", 55],
];

export default function App() {
  return (
    <Desktop>
      <GlobalStyle />
      <Defs />
      <MenuBar>
        <AppleMark><FaApple /></AppleMark>
        <MenuItem $w={74} $bold>Safari</MenuItem>
        {menus.map(([label, w]) => <MenuItem key={label} $w={w}>{label}</MenuItem>)}
        <MenuStatus />
      </MenuBar>
      <Editor />
      <BrowserWindow>
        <BrowserToolbar />
        <Tabs />
        <ContactPage />
      </BrowserWindow>
      <DockBar />
    </Desktop>
  );
}
